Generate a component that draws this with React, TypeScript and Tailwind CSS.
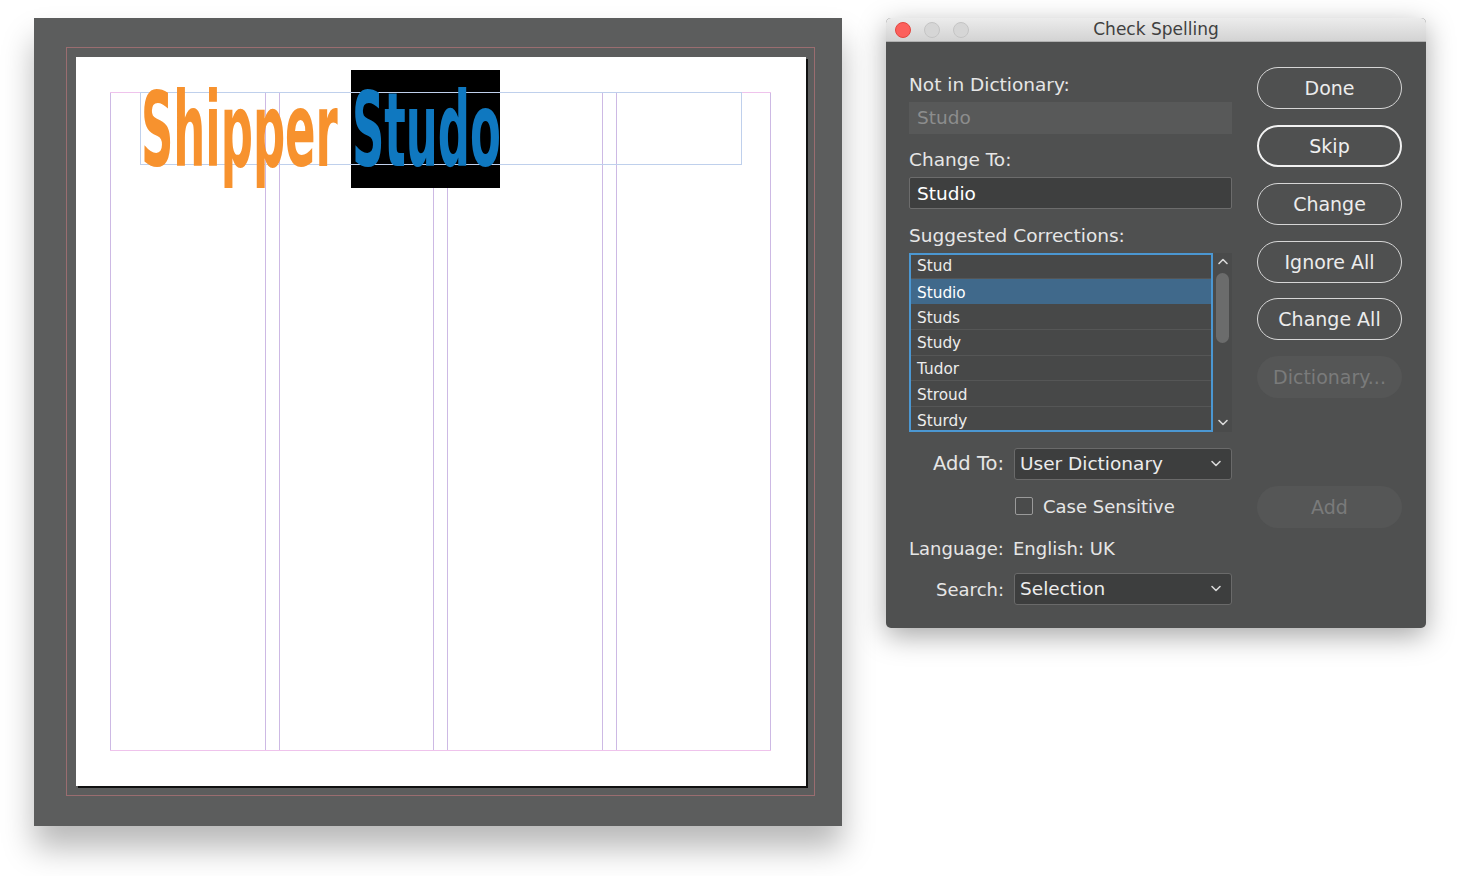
import React from "react";

const suggestions = ["Stud", "Studio", "Studs", "Study", "Tudor", "Stroud", "Sturdy"];

const buttons = [
  { label: "Done", kind: "normal", mt: "mt-[25px]" },
  { label: "Skip", kind: "default", mt: "mt-[16px]" },
  { label: "Change", kind: "normal", mt: "mt-[16px]" },
  { label: "Ignore All", kind: "normal", mt: "mt-[16px]" },
  { label: "Change All", kind: "normal", mt: "mt-[15px]" },
  { label: "Dictionary...", kind: "disabled", mt: "mt-[16px]" },
  { label: "Add", kind: "disabled", mt: "mt-[88px]" },
];

function Chevron({ up = false }: { up?: boolean }) {
  return (
    <svg width="12" height="8" viewBox="0 0 12 8" fill="none">
      <path
        d={up ? "M2 6.5 L6 2.5 L10 6.5" : "M2 1.5 L6 5.5 L10 1.5"}
        stroke="#d8d8d8"
        strokeWidth="1.6"
        strokeLinecap="round"
        strokeLinejoin="round"
      />
    </svg>
  );
}

function Select({ value }: { value: string }) {
  return (
    <div className="flex h-[32px] flex-1 items-center justify-between rounded-[3px] border border-[#6a6a6a] bg-[#3d3e3e] pl-[5px] pr-[9px] text-[18.5px] text-[#ececec]">
      <span>{value}</span>
      <Chevron />
    </div>
  );
}

function Document() {
  return (
    <div className="flex h-[808px] w-[808px] shrink-0 bg-[#5c5d5d] pl-[32px] pt-[29px] shadow-[0_22px_30px_rgba(0,0,0,0.28)]">
      {/* bleed line */}
      <div className="h-[749px] w-[749px] border border-[#9a6d70] pl-[9px] pt-[9px]">
        {/* page */}
        <div className="relative h-[729px] w-[730px] bg-white shadow-[2px_2px_0_#111]">
          {/* margins and columns */}
          <div className="absolute left-[34px] top-[35px] grid h-[659px] w-[661px] grid-cols-4 gap-x-[13px] border-y border-[#efc3ec]">
            <div className="border-x border-[#cdb9e4]" />
            <div className="border-x border-[#cdb9e4]" />
            <div className="border-x border-[#cdb9e4]" />
            <div className="border-x border-[#cdb9e4]" />
          </div>
          {/* black frame */}
          <div className="absolute left-[275px] top-[13px] h-[118px] w-[149px] bg-black" />
          {/* text frame */}
          <div className="absolute left-[64px] top-[35px] h-[73px] w-[602px] border border-[#bfd0ec]" />
          <span
            className="absolute left-[65px] top-[22px] origin-left scale-x-[0.485] whitespace-nowrap text-[103px] font-bold leading-none text-[#f7922e]"
            style={{ fontFamily: '"DejaVu Sans Condensed", "DejaVu Sans", sans-serif' }}
          >
            Shipper
          </span>
          <span
            className="absolute left-[276px] top-[22px] origin-left scale-x-[0.485] whitespace-nowrap text-[103px] font-bold leading-none text-[#0f78c0]"
            style={{ fontFamily: '"DejaVu Sans Condensed", "DejaVu Sans", sans-serif' }}
          >
            Studo
          </span>
        </div>
      </div>
    </div>
  );
}

function Dialog() {
  return (
    <div className="flex h-[610px] w-[540px] shrink-0 flex-col overflow-hidden rounded-[5px] bg-[#4f5050] shadow-[0_8px_28px_rgba(0,0,0,0.35)]">
      {/* title bar */}
      <div className="relative flex h-[24px] items-center justify-center border-b border-[#b0b0b0] bg-gradient-to-b from-[#ececec] to-[#d3d3d3]">
        <div className="absolute left-[9px] top-[4px] flex gap-[13px]">
          <span className="h-[16px] w-[16px] rounded-full border border-[#e2463f] bg-[#fc605c]" />
          <span className="h-[16px] w-[16px] rounded-full border border-[#c4c4c4] bg-[#d6d6d6]" />
          <span className="h-[16px] w-[16px] rounded-full border border-[#c4c4c4] bg-[#d6d6d6]" />
        </div>
        <span className="text-[17px] text-[#404040]">Check Spelling</span>
      </div>

      <div className="flex flex-1 pl-[23px] pr-[24px]">
        {/* left column */}
        <div className="flex w-[323px] flex-col pt-[31px] text-[#e6e6e6]">
          <div className="h-[24px] text-[18.5px] leading-[24px]">Not in Dictionary:</div>
          <div className="mt-[5px] flex h-[32px] items-center bg-[#585959] px-[8px] text-[18.5px] text-[#8c8d8d]">
            Studo
          </div>
          <div className="mt-[14px] h-[24px] text-[18.5px] leading-[24px]">Change To:</div>
          <div className="mt-[5px] flex h-[32px] items-center rounded-[2px] border border-[#6c6c6c] bg-[#3e3f3f] px-[7px] pt-[1px] text-[18.5px] text-white">
            Studio
          </div>
          <div className="mt-[15px] h-[24px] text-[18.5px] leading-[24px]">Suggested Corrections:</div>
          <div className="mt-[5px] flex h-[179px]">
            <div className="relative flex w-[304px] flex-col overflow-hidden bg-[#474848]">
              {suggestions.map((s, i) => (
                <div
                  key={s}
                  className={
                    i === 1
                      ? "flex h-[25.7px] shrink-0 items-center bg-[#40698b] pl-[8px] pt-[3px] text-[15.3px] text-white"
                      : "flex h-[25.7px] shrink-0 items-center border-b border-[#555656] pl-[8px] pt-[3px] text-[15.3px] text-[#ededed]"
                  }
                >
                  {s}
                </div>
              ))}
              <div className="pointer-events-none absolute inset-0 border-2 border-[#4b97d2]" />
            </div>
            <div className="flex flex-1 flex-col items-center bg-[#4a4b4b] pt-[4px]">
              <Chevron up />
              <div className="mt-[8px] h-[70px] w-[13px] rounded-full bg-[#6b6c6c]" />
              <div className="mt-auto pb-[5px]">
                <Chevron />
              </div>
            </div>
          </div>

          <div className="mt-[16px] flex items-center">
            <span className="w-[105px] pr-[10px] text-right text-[19.5px]">Add To:</span>
            <Select value="User Dictionary" />
          </div>
          <div className="mt-[14px] flex h-[24px] items-center pl-[106px]">
            <span className="h-[18px] w-[18px] rounded-[2px] border border-[#9a9a9a] bg-[#4a4b4b]" />
            <span className="ml-[10px] text-[18px]">Case Sensitive</span>
          </div>
          <div className="mt-[18px] flex h-[24px] items-center text-[18px]">
            <span className="w-[104px]">Language:</span>
            <span>English: UK</span>
          </div>
          <div className="mt-[13px] flex items-center">
            <span className="w-[105px] pr-[10px] text-right text-[18px]">Search:</span>
            <Select value="Selection" />
          </div>
        </div>

        {/* right column */}
        <div className="ml-[25px] flex w-[145px] flex-col">
          {buttons.map((b) => (
            <div
              key={b.label}
              className={
                b.mt +
                " " +
                (b.kind === "default"
                  ? "flex h-[42px] items-center justify-center rounded-full border-[2.5px] border-[#f2f2f2] text-[19px] text-[#f0f0f0]"
                  : b.kind === "disabled"
                  ? "flex h-[42px] items-center justify-center rounded-full bg-[#555656] text-[19px] text-[#7a7b7b]"
                  : "flex h-[42px] items-center justify-center rounded-full border-[1.5px] border-[#d6d6d6] text-[19px] text-[#ececec]")
              }
            >
              {b.label}
            </div>
          ))}
        </div>
      </div>
    </div>
  );
}

export default function App() {
  return (
    <div
      className="flex h-[876px] w-[1461px] gap-[44px] overflow-hidden bg-white pl-[34px] pt-[18px]"
      style={{ fontFamily: '"DejaVu Sans", "Liberation Sans", sans-serif' }}
    >
      <Document />
      <Dialog />
    </div>
  );
}
